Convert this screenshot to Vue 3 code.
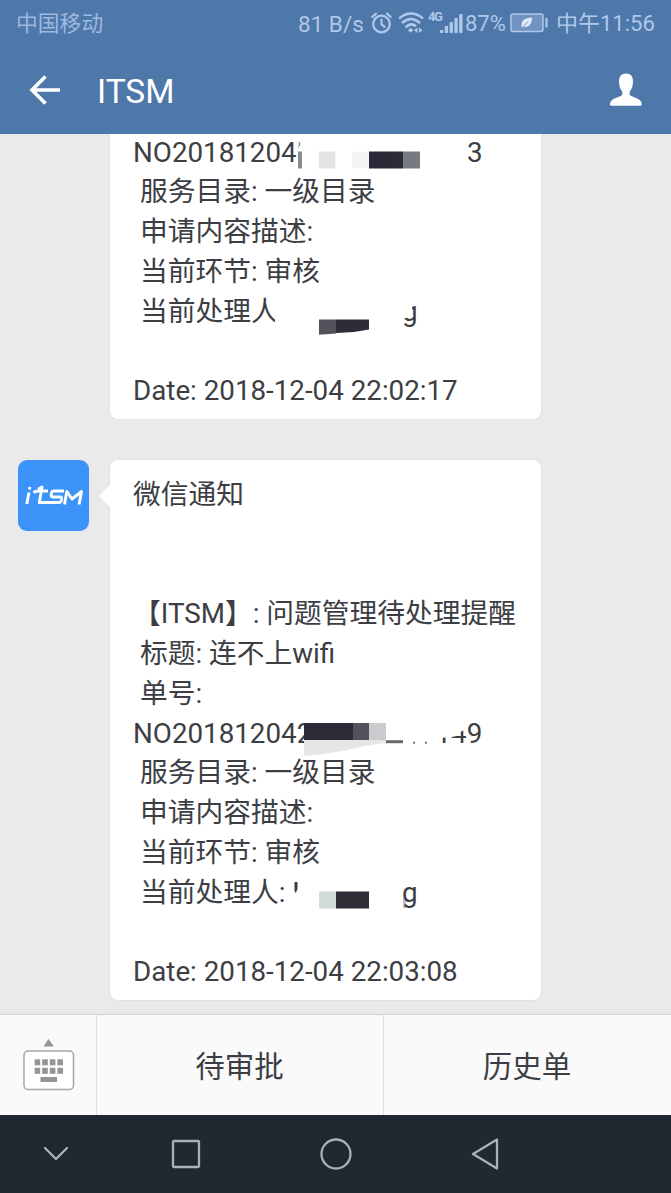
<script setup>
const first = [
  { t: 'NO201812042', mask: 'serial-a' },
  { t: ' 服务目录: 一级目录' },
  { t: ' 申请内容描述:' },
  { t: ' 当前环节: 审核' },
  { t: ' 当前处理人', mask: 'name-a' },
  { t: '' },
  { t: 'Date: 2018-12-04 22:02:17' },
]
const second = [
  { t: '微信通知' },
  { t: '' },
  { t: '' },
  { t: '【ITSM】: 问题管理待处理提醒' },
  { t: ' 标题: 连不上wifi' },
  { t: ' 单号:' },
  { t: 'NO201812042', mask: 'serial-b' },
  { t: ' 服务目录: 一级目录' },
  { t: ' 申请内容描述:' },
  { t: ' 当前环节: 审核' },
  { t: ' 当前处理人:', mask: 'name-b' },
  { t: '' },
  { t: 'Date: 2018-12-04 22:03:08' },
]
const bars = [3, 7, 11, 15, 19]
</script>

<template>
  <div class="phone">
    <header class="top">
      <div class="status">
        <span class="carrier">中国移动</span>
        <span class="speed">81 B/s</span>
        <svg class="alarm" width="21" height="22" viewBox="0 0 21 22">
          <g fill="none" stroke="currentColor" stroke-width="2.200" stroke-linecap="round">
            <circle cx="10.500" cy="12" r="8.300" />
            <path d="M10.500 7.500v4.800l3 2.600M1.200 5 5 1.700M19.800 5 16 1.700" />
          </g>
        </svg>
        <svg class="wifi" width="26" height="22" viewBox="0 0 26 22">
          <g fill="none" stroke="currentColor" stroke-width="2.500">
            <path d="M1 6.500Q13-3.500 25 6.500M4 11Q13 3 22 11M7.500 15.300Q13 10 18 14.300" />
          </g>
          <path fill="currentColor" d="M10 18.200l2.700-2.500 2.700 2.500-2.700 2.500zM16 18.200l3.500-2.800v5.600zM24.500 18.200l-3.500-2.800v5.600z" />
        </svg>
        <span class="net">4G</span>
        <svg class="signal" width="23" height="20" viewBox="0 0 23 20">
          <rect v-for="(h, i) in bars" :key="h" :x="i * 4.800" :y="20 - h" width="3.300" :height="h" rx=".7" fill="currentColor" />
        </svg>
        <span class="percent">87%</span>
        <svg class="battery" width="39" height="20" viewBox="0 0 39 20">
          <rect x="1" y="1" width="32" height="17.500" rx="2" fill="#7093c1" stroke="currentColor" stroke-width="1.500" />
          <path d="M36.500 5v9.500" stroke="currentColor" stroke-width="2.200" />
          <path d="M12 15C10 7 15 5 22 4.500 22 12 18 15 13.500 13.500z" fill="#e0eafa" />
          <path d="M12.500 14.500 18 8.500" stroke="#7897c1" stroke-width="1" />
        </svg>
        <span class="clock">中午11:56</span>
      </div>
      <div class="title-bar">
        <svg class="back" width="32" height="32" viewBox="0 0 32 32">
          <path d="M16.500 2.500 3 16l13.500 13.500M3.500 16H31" fill="none" stroke="#fff" stroke-width="3.600" />
        </svg>
        <h1>ITSM</h1>
        <svg class="person" width="34" height="34" viewBox="0 0 34 34">
          <path fill="#fff" d="M17 .5c4.600 0 7 3 7 7.500 0 5-1.300 8.500-3.300 10.500v3.300c1.500 2 4.800 2.300 8 4 3 1.600 4 3.200 4 5.700 0 .8-.5 1.200-1.300 1.200H2.300C1.500 32.700 1 32.300 1 31.500c0-2.500 1-4.100 4-5.700 3.200-1.700 6.800-2 8.300-4v-3.300C11.300 16.500 10 13 10 8 10 3.500 12.400.5 17 .5z" />
        </svg>
      </div>
    </header>

    <main class="chat">
      <section class="card card-first">
        <div v-for="(l, i) in first" :key="i" class="line">
          {{ l.t }}
          <svg v-if="l.mask === 'serial-a'" class="mask" width="400" height="40" viewBox="0 0 400 40">
            <rect x="165.500" y="0" width="160" height="40" fill="#fff" />
            <path d="M166.500 13v-4" stroke="#8b9399" stroke-width="1.500" />
            <rect x="165" y="18.500" width="4" height="17" fill="#888c90" />
            <rect x="186" y="18.500" width="16.500" height="17" fill="#e1e3e5" />
            <rect x="219" y="18.500" width="17" height="17" fill="#f4f5f6" />
            <rect x="236" y="18.500" width="17" height="17" fill="#2b2938" />
            <rect x="253" y="18.500" width="17" height="17" fill="#2b2b33" />
            <rect x="270" y="18.500" width="17" height="17" fill="#777a81" />
            <text x="334" y="29.200">3</text>
          </svg>
          <svg v-if="l.mask === 'name-a'" class="mask" width="400" height="50" viewBox="0 0 400 50">
            <rect x="142" y="4" width="8" height="32" fill="#fff" />
            <path d="M186 27.500h17v14l-17 1.200z" fill="#53535b" />
            <path d="M203 27.500h33v10q-14 3-33 3.500z" fill="#2e2c37" />
            <text x="269" y="29.200">g</text>
            <path d="M266 8h20v6h-7v11h-3l-3 1h-7z" fill="#fff" />
          </svg>
        </div>
      </section>

      <div class="message">
        <div class="avatar">
          <svg width="71" height="71" viewBox="0 0 71 71">
            <g fill="none" stroke="#fff" stroke-width="2.900" stroke-linejoin="round">
              <path d="M11 32.500 8.800 44M12 27l-.6 2.500M15.500 32.500q2-1.500 5-1.500h9.500M20 29.500l4-2.500-2.700 15.500h19.500q2 0 2.500-2l.3-1.500q.3-2-1.700-2h-6.700q-2.300 0-2-2l.3-2q.4-2 2.500-2h10" />
              <path d="M46.500 44.500 48.800 31.500 54 39l9.500-7.500-2.500 13" />
            </g>
          </svg>
        </div>
        <section class="card card-second">
          <div v-for="(l, i) in second" :key="i" class="line">
            {{ l.t }}
            <svg v-if="l.mask === 'serial-b'" class="mask" width="400" height="50" viewBox="0 0 400 50">
              <rect x="171" y="4" width="120" height="34" fill="#fff" />
              <path d="M171 26h82v3q-20 2-35 6t-47 7z" fill="#e6e6e7" />
              <rect x="171" y="9" width="49" height="17" fill="#2b2a36" />
              <rect x="220" y="9" width="16" height="17" fill="#53525c" />
              <rect x="236" y="9" width="17" height="17" fill="#cbcbcd" />
              <path d="M253 27.700h17" stroke="#67676d" stroke-width="3" />
              <path d="M280 28.700h2M292 28.700h2" stroke="#77777d" stroke-width="2" />
              <text x="302.500" y="29.200">149</text>
              <path d="M298 4h35v11.500l-4 1.500-7 5.500-8 1h-16z" fill="#fff" />
            </svg>
            <svg v-if="l.mask === 'name-b'" class="mask" width="400" height="50" viewBox="0 0 400 50">
              <path d="M161.500 9h3v7l-1.700 4-1.300-2z" fill="#3c3f45" />
              <rect x="186" y="18.500" width="17" height="17" fill="#d3dada" />
              <rect x="203" y="18.500" width="33" height="17" fill="#2e2e34" />
              <path d="M270 25h3v10h-3z" fill="#bfc1c2" />
              <text x="269" y="29.200">g</text>
            </svg>
          </div>
        </section>
      </div>
    </main>

    <footer class="menu">
      <div class="keyboard">
        <svg width="52" height="54" viewBox="0 0 52 54">
          <path d="M20.500 9.500 25.500 2l5.500 7.500z" fill="#949494" />
          <rect x="1" y="14" width="49.500" height="38.500" rx="4" fill="#fff" stroke="#a5a5a5" stroke-width="1.500" />
          <g fill="#949494">
            <template v-for="r in 2" :key="r">
              <rect v-for="c in 4" :key="c" :x="4 + c * 7.600" :y="13.800 + r * 8.500" width="5.600" height="6" />
            </template>
            <rect x="17.500" y="40" width="16.500" height="5" />
          </g>
        </svg>
      </div>
      <div class="entry">待审批</div>
      <div class="entry">历史单</div>
    </footer>

    <nav class="nav">
      <svg width="26" height="30" viewBox="0 0 26 30"><path d="m2 9 11 11L24 9" /></svg>
      <svg width="30" height="30" viewBox="0 0 30 30"><rect x="2" y="2" width="26" height="26" rx="1" /></svg>
      <svg width="34" height="34" viewBox="0 0 34 34"><circle cx="17" cy="17" r="14.500" /></svg>
      <svg width="30" height="34" viewBox="0 0 30 34"><path d="M27 2.500v29L3 17z" /></svg>
    </nav>
  </div>
</template>

<style>
body { margin: 0; }
</style>

<style scoped>
.phone {
  width: 671px;
  height: 1193px;
  display: flex;
  flex-direction: column;
  overflow: hidden;
  background: #eaeaea;
  font-family: Roboto, "Noto Sans CJK SC", sans-serif;
  color: #3c3e43;
}
.top { height: 134px; background: #4e77aa; flex: none; }
.status {
  height: 46px;
  display: flex;
  align-items: center;
  padding-left: 16px;
  font-size: 22px;
  line-height: 46px;
  color: #b0c8e9;
  white-space: nowrap;
}
.status span { flex: none; padding-top: 2px; }
.status svg { flex: none; }
.carrier { width: 282px; color: #9db9df; font-size: 21.800px; }
.speed { width: 73px; font-size: 22.500px; }
.alarm { width: 21px; }
.wifi { margin-left: 6px; }
.status .net { font-size: 13px; font-weight: 700; line-height: 13px; width: 14px; margin: -15px 0 0 4px; letter-spacing: -1.500px; }
.signal { margin-left: -2px; }
.percent { width: 43px; margin-left: 2px; }
.battery { margin-left: 2px; }
.clock { margin-left: 7px; }
.title-bar { height: 88px; display: flex; align-items: center; }
.back { margin-left: 29px; }
h1 { margin: 3px 0 0 36px; font-size: 33.500px; font-weight: 400; line-height: 40px; color: #fff; }
.person { margin-left: auto; margin-right: 28px; }
.chat { height: 880px; overflow: hidden; flex: none; }
.card {
  box-sizing: border-box;
  width: 431px;
  background: #fff;
  box-shadow: 0 0 2px #d2d2d2;
  padding-left: 23px;
}
.card-first { display: flow-root; margin-left: 110px; height: 285px; border-radius: 0 0 8px 8px; }
.card-second { height: 540px; padding-top: 15px; border-radius: 8px; position: relative; }
.card-second::before {
  content: "";
  position: absolute;
  left: -11px;
  top: 25px;
  border: solid transparent;
  border-width: 11px 11px 11px 0;
  border-right-color: #fff;
}
.line {
  position: relative;
  height: 39.750px;
  line-height: 39.750px;
  font-size: 27.750px;
  white-space: pre;
}
.card-first .line:first-child { margin-top: -1.500px; }
.mask { position: absolute; left: 0; top: 0; overflow: visible; }
.mask text { font-size: 27.750px; fill: #3c3e43; }
.message { display: flex; align-items: flex-start; margin: 41px 0 0 18px; }
.avatar { width: 71px; height: 71px; margin-right: 21px; border-radius: 9px; background: #3c94fb; }
.avatar svg { display: block; }
.menu {
  box-sizing: border-box;
  height: 101px;
  flex: none;
  display: grid;
  grid-template-columns: 96px 287px 1fr;
  background: #fafafa;
  border-top: 1px solid #d5d5d5;
}
.keyboard { display: flex; justify-content: center; padding: 22px 0 0 1px; }
.entry { border-left: 1px solid #dfdfdf; text-align: center; font-size: 29.500px; line-height: 100px; padding: 2px 1px 0 0; height: 98px; }
.nav {
  flex: 1;
  display: flex;
  align-items: center;
  padding-left: 43px;
  background: #212832;
}
.nav svg { fill: none; stroke: #abb0ba; stroke-width: 2.300; stroke-linecap: round; stroke-linejoin: round; }
.nav svg:nth-child(2) { margin-left: 102px; }
.nav svg:nth-child(3) { margin-left: 118px; }
.nav svg:nth-child(4) { margin-left: 117px; }
</style>
